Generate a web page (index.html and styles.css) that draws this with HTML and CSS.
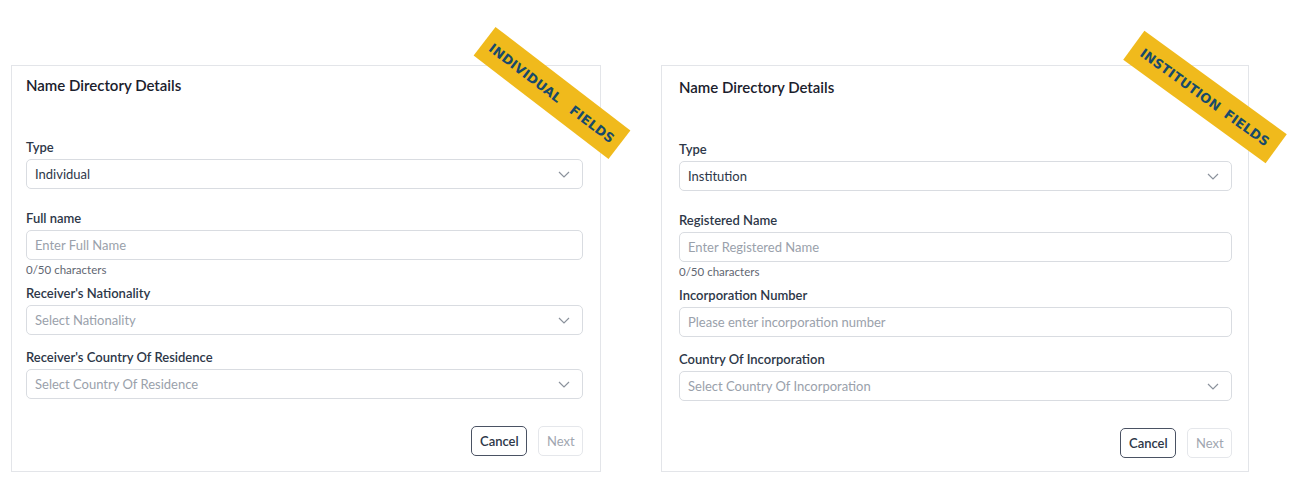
FILE: index.html
```html
<!DOCTYPE html>
<html lang="en">
<head>
    <meta charset="UTF-8">
    <meta name="viewport" content="width=device-width, initial-scale=1.0">
    <title>Name Directory Details</title>
    <link rel="stylesheet" href="styles.css">
</head>
<body>
    <div class="page">
        <!-- individual form -->
        <div class="card card-individual">
            <div class="ribbon ribbon-individual">
                <span>INDIVIDUAL</span>
                <span>FIELDS</span>
            </div>
            <h2 class="card-title">Name Directory Details</h2>

            <div class="field field-type">
                <label>Type</label>
                <div class="select">
                    <span class="select-value">Individual</span>
                    <svg class="chevron" width="12" height="7" viewBox="0 0 12 7"><polyline points="1,1 6,6 11,1" /></svg>
                </div>
            </div>

            <div class="field field-counted">
                <label>Full name</label>
                <input type="text" placeholder="Enter Full Name">
                <div class="helper">0/50 characters</div>
            </div>

            <div class="field">
                <label>Receiver's Nationality</label>
                <div class="select">
                    <span class="select-placeholder">Select Nationality</span>
                    <svg class="chevron" width="12" height="7" viewBox="0 0 12 7"><polyline points="1,1 6,6 11,1" /></svg>
                </div>
            </div>

            <div class="field">
                <label>Receiver's Country Of Residence</label>
                <div class="select">
                    <span class="select-placeholder">Select Country Of Residence</span>
                    <svg class="chevron" width="12" height="7" viewBox="0 0 12 7"><polyline points="1,1 6,6 11,1" /></svg>
                </div>
            </div>

            <div class="actions">
                <button class="btn btn-cancel">Cancel</button>
                <button class="btn btn-next" disabled>Next</button>
            </div>
        </div>

        <!-- institution form -->
        <div class="card card-institution">
            <div class="ribbon ribbon-institution">
                <span>INSTITUTION</span>
                <span>FIELDS</span>
            </div>
            <h2 class="card-title">Name Directory Details</h2>

            <div class="field field-type">
                <label>Type</label>
                <div class="select">
                    <span class="select-value">Institution</span>
                    <svg class="chevron" width="12" height="7" viewBox="0 0 12 7"><polyline points="1,1 6,6 11,1" /></svg>
                </div>
            </div>

            <div class="field field-counted">
                <label>Registered Name</label>
                <input type="text" placeholder="Enter Registered Name">
                <div class="helper">0/50 characters</div>
            </div>

            <div class="field">
                <label>Incorporation Number</label>
                <input type="text" placeholder="Please enter incorporation number">
            </div>

            <div class="field">
                <label>Country Of Incorporation</label>
                <div class="select">
                    <span class="select-placeholder">Select Country Of Incorporation</span>
                    <svg class="chevron" width="12" height="7" viewBox="0 0 12 7"><polyline points="1,1 6,6 11,1" /></svg>
                </div>
            </div>

            <div class="actions">
                <button class="btn btn-cancel">Cancel</button>
                <button class="btn btn-next" disabled>Next</button>
            </div>
        </div>
    </div>
</body>
</html>
```

FILE: styles.css
```css
body {
    margin: 0;
    font-family: Lato, "Noto Sans", sans-serif;
    background-color: #ffffff;
    color: #2d3748;
}
.page {
    display: flex;
    gap: 60px;
    padding: 65px 0 0 11px;
}
.card {
    position: relative;
    box-sizing: border-box;
    height: 407px;
    border: 1px solid #e3e5e9;
    padding: 9px 17px 14px 14px;
}
.card-individual {
    width: 590px;
}
.card-institution {
    width: 588px;
    padding: 11px 16px 14px 17px;
}
.card-title {
    margin: 0 0 42px;
    font-size: 15px;
    line-height: 20px;
    font-weight: 600;
    color: #1a202c;
}
.field {
    margin-bottom: 12px;
}
.field-type {
    margin-bottom: 19px;
}
.field-counted {
    margin-bottom: 5px;
}
.field label {
    display: block;
    margin-bottom: 2px;
    font-size: 13px;
    line-height: 20px;
    font-weight: 600;
    color: #2d3748;
}
.field input,
.select {
    box-sizing: border-box;
    width: 100%;
    height: 30px;
    border: 1px solid #d9dce1;
    border-radius: 5px;
    padding: 0 8px;
    font-family: inherit;
    font-size: 13px;
    color: #2d3748;
    background: #fff;
}
.field input::placeholder {
    color: #9aa1ab;
}
.select {
    display: flex;
    align-items: center;
    justify-content: space-between;
    padding-right: 12px;
}
.select-value {
    color: #2d3748;
}
.select-placeholder {
    color: #9aa1ab;
}
.chevron polyline {
    fill: none;
    stroke: #8b929c;
    stroke-width: 1.2;
}
.helper {
    margin-top: 2px;
    font-size: 11.5px;
    line-height: 16px;
    color: #5f6672;
}
.actions {
    display: flex;
    justify-content: flex-end;
    gap: 11px;
    margin-top: 27px;
}
.btn {
    height: 30px;
    padding: 0 8px;
    border-radius: 5px;
    font-family: inherit;
    font-size: 13px;
    font-weight: 600;
    background: #fff;
}
.btn-cancel {
    width: 56px;
    border: 1px solid #4a5263;
    color: #2d3748;
}
.btn-next {
    width: 45px;
    border: 1px solid #e5e7eb;
    color: #a0a6b0;
    font-weight: 400;
}
.ribbon {
    position: absolute;
    box-sizing: border-box;
    height: 36px;
    display: flex;
    align-items: center;
    justify-content: space-between;
    background-color: #f0ba1c;
    color: #174a6b;
    font-family: "DejaVu Sans", sans-serif;
    font-size: 13px;
    font-weight: 700;
    letter-spacing: 0.2px;
}
.ribbon-individual {
    left: 455px;
    top: 9px;
    width: 170px;
    padding: 0 8px;
    transform: rotate(37.5deg);
}
.ribbon-institution {
    left: 455px;
    top: 13px;
    width: 176px;
    padding: 0 10px;
    transform: rotate(36deg);
}
```
